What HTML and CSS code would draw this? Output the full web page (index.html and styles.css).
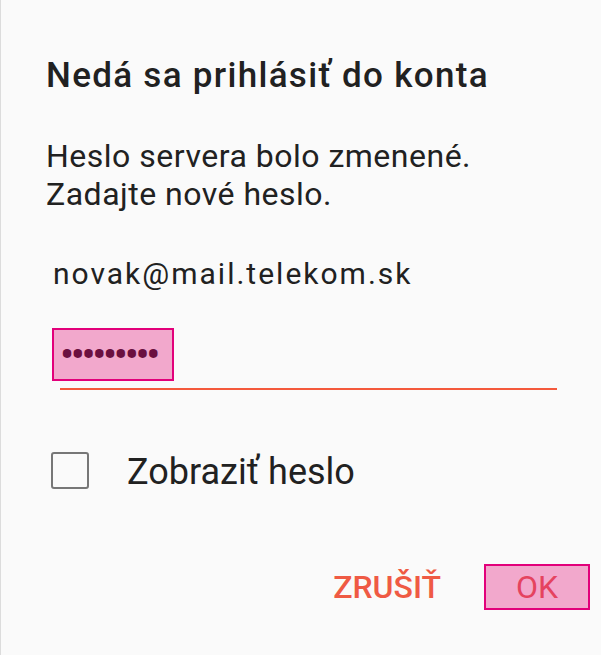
FILE: index.html
```html
<!DOCTYPE html>
<html>
  <head>
    <title>Nedá sa prihlásiť do konta</title>
    <link rel="stylesheet" href="styles.css">
  </head>
  <body>
    <div class="dialog">
      <h1 class="title">Nedá sa prihlásiť do konta</h1>
      <p class="message">Heslo servera bolo zmenené.<br>Zadajte nové heslo.</p>
      <div class="account">novak@mail.telekom.sk</div>
      <div class="field">
        <span class="pwd">•••••••••</span>
      </div>
      <label class="check">
        <span class="box"></span>
        <span class="check-label">Zobraziť heslo</span>
      </label>
      <div class="actions">
        <span class="btn">ZRUŠIŤ</span>
        <span class="btn ok">OK</span>
      </div>
    </div>
  </body>
</html>
```

FILE: styles.css
```css
html, body { margin: 0; padding: 0; }
body {
	background: #fafafa;
	font-family: Roboto, "Noto Sans", sans-serif;
	color: #212121;
}
.dialog {
	height: 655px;
	box-sizing: border-box;
	border-left: 1px solid #dcdcdc;
	padding: 56px 0 0 45px;
}
.title {
	margin: 0;
	font-size: 35px;
	line-height: 40px;
	font-weight: 500;
	letter-spacing: 1.3px;
}
.message {
	margin: 41px 0 0 0;
	font-size: 32px;
	line-height: 38px;
	font-weight: 400;
	letter-spacing: 0.5px;
}
.account {
	margin: 43px 0 0 7px;
	font-size: 30px;
	line-height: 36px;
	letter-spacing: 2px;
}
.field {
	margin: 36px 44px 0 14px;
	padding-bottom: 7px;
	border-bottom: 2px solid #f4593c;
	display: flex;
}
.pwd {
	margin-left: -8px;
	width: 122px;
	height: 53px;
	box-sizing: border-box;
	border: 2px solid #e2007a;
	background: #f2a8cc;
	color: #6b1040;
	padding-left: 6px;
	font-size: 42px;
	line-height: 49px;
	letter-spacing: -3.4px;
	overflow: hidden;
}
.check {
	display: flex;
	align-items: flex-start;
	margin: 62px 0 0 5px;
}
.box {
	width: 38px;
	height: 37px;
	box-sizing: border-box;
	border: 2px solid #777;
	border-radius: 3px;
}
.check-label {
	margin: 2px 0 0 38px;
	font-size: 36px;
	line-height: 37px;
}
.actions {
	display: flex;
	justify-content: flex-end;
	align-items: center;
	margin: 73px 11px 0 0;
}
.btn {
	font-size: 32px;
	font-weight: 500;
	color: #ef5a44;
	line-height: 46px;
}
.ok {
	margin-left: 43px;
	width: 106px;
	height: 46px;
	box-sizing: border-box;
	border: 2px solid #e2007a;
	background: #f2a8cc;
	color: #e5435f;
	font-weight: 400;
	text-align: center;
	line-height: 42px;
}
```
